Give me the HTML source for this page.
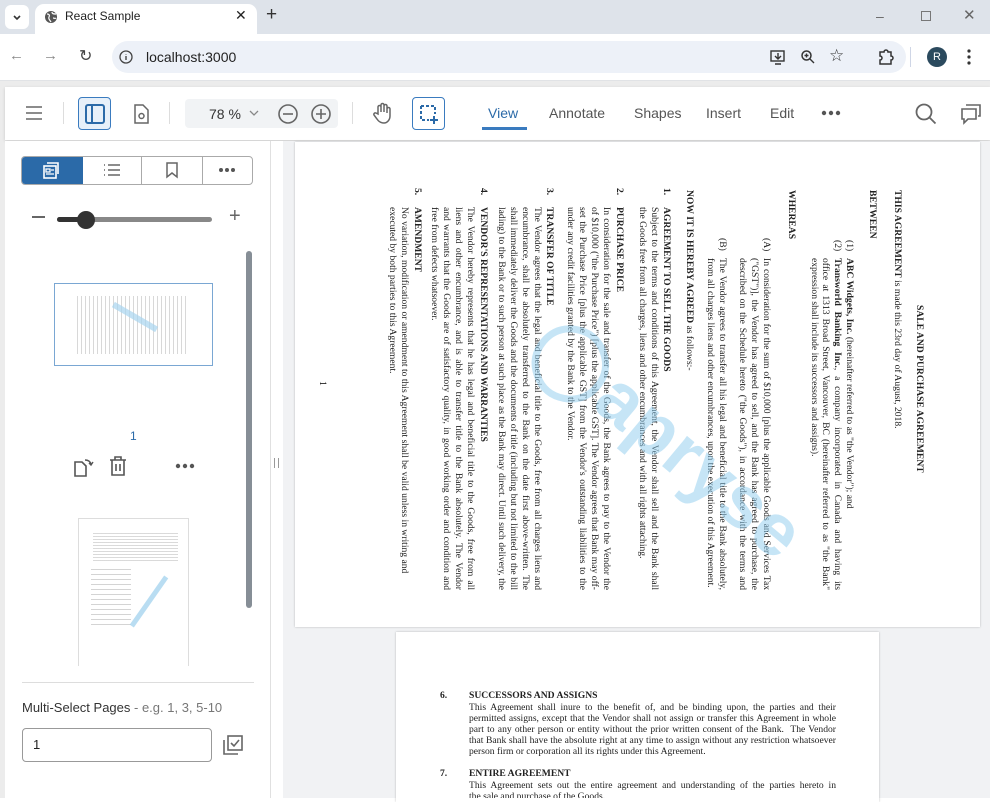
<!DOCTYPE html>
<html><head><meta charset="utf-8"><style>
*{margin:0;padding:0;box-sizing:border-box}
body{width:990px;height:798px;overflow:hidden;position:relative;background:#fff;font-family:"Liberation Sans",sans-serif}
.a{position:absolute}
.ser{font-family:"Liberation Serif",serif;color:#222}
.l{position:absolute;white-space:nowrap;font-size:9.6px;line-height:11px}
.j{white-space:normal;text-align:justify;text-align-last:justify;height:11px;overflow:hidden}
b{font-weight:bold}
.tb{color:#555;font-size:14px}
</style></head><body>
<!-- tab bar -->
<div class="a" style="left:0;top:0;width:990px;height:34px;background:#dee3ea"></div>
<div class="a" style="left:5px;top:5px;width:24px;height:24px;border-radius:6px;background:#fff"></div>
<svg class="a" style="left:11px;top:11px" width="12" height="12"><path d="M3 5l3 3 3-3" stroke="#333" stroke-width="1.6" fill="none"/></svg>
<div class="a" style="left:35px;top:4px;width:222px;height:32px;background:#fff;border-radius:9px 9px 0 0"></div>
<svg class="a" style="left:44px;top:10px" width="14" height="14" viewBox="0 0 14 14"><circle cx="7" cy="7" r="6" fill="#555"/><path d="M3 4c2 0 3 1 2 3s1 3 2 5M8 2c0 2 2 2 4 2M9 8c1 0 2 1 3 0" stroke="#fff" stroke-width="1.2" fill="none"/></svg>
<div class="a" style="left:65px;top:9px;font-size:12px;color:#222">React Sample</div>
<div class="a" style="left:235px;top:7px;font-size:14px;color:#222">✕</div>
<div class="a" style="left:266px;top:4px;font-size:19px;color:#333">+</div>
<div class="a" style="left:876px;top:8px;font-size:14px;color:#666">–</div>
<div class="a" style="left:921px;top:11px;width:10px;height:10px;border:1px solid #777"></div>
<div class="a" style="left:963px;top:6px;font-size:15px;color:#666">✕</div>
<!-- address bar -->
<div class="a" style="left:0;top:34px;width:990px;height:46px;background:#fff"></div>
<div class="a" style="left:9px;top:47px;font-size:15px;color:#888">←</div>
<div class="a" style="left:43px;top:47px;font-size:15px;color:#888">→</div>
<div class="a" style="left:79px;top:46px;font-size:16px;color:#444">↻</div>
<div class="a" style="left:112px;top:41px;width:794px;height:32px;border-radius:16px;background:#edf1f8"></div>
<svg class="a" style="left:119px;top:50px" width="14" height="14"><circle cx="7" cy="7" r="6" stroke="#444" fill="none" stroke-width="1.3"/><path d="M7 6v4M7 4v.5" stroke="#444" stroke-width="1.4"/></svg>
<div class="a" style="left:146px;top:49px;font-size:14px;color:#222">localhost:3000</div>
<svg class="a" style="left:769px;top:48px" width="18" height="18"><rect x="2" y="3" width="13" height="10" fill="none" stroke="#333" stroke-width="1.4"/><path d="M9 5v6M6 8l3 3 3-3M6 16h6" stroke="#333" stroke-width="1.4" fill="none"/></svg>
<svg class="a" style="left:800px;top:49px" width="16" height="16"><circle cx="6.5" cy="6.5" r="4.5" fill="none" stroke="#333" stroke-width="1.5"/><path d="M10 10l4 4M4.5 6.5h4M6.5 4.5v4" stroke="#333" stroke-width="1.4"/></svg>
<div class="a" style="left:829px;top:46px;font-size:17px;color:#333">☆</div>
<svg class="a" style="left:877px;top:48px" width="18" height="18"><path d="M3 4h4a2 2 0 014 0h3v4a2 2 0 010 4v4H3v-4a2 2 0 000-4z" fill="none" stroke="#333" stroke-width="1.5"/></svg>
<div class="a" style="left:910px;top:47px;width:1px;height:20px;background:#cfd6e6"></div>
<div class="a" style="left:927px;top:47px;width:20px;height:20px;border-radius:50%;background:#2b4a5e;color:#fff;font-size:11px;text-align:center;line-height:20px">R</div>
<svg class="a" style="left:966px;top:48px" width="6" height="18"><circle cx="3" cy="3" r="1.6" fill="#333"/><circle cx="3" cy="9" r="1.6" fill="#333"/><circle cx="3" cy="15" r="1.6" fill="#333"/></svg>
<div class="a" style="left:0;top:80px;width:990px;height:1px;background:#e1e3e6"></div>
<!-- app frame -->
<div class="a" style="left:0;top:81px;width:990px;height:717px;background:#ececec"></div>
<div class="a" style="left:5px;top:87px;width:985px;height:53px;background:#fff;box-shadow:0 1px 3px rgba(0,0,0,.15)"></div>
<!-- toolbar -->
<svg class="a" style="left:25px;top:105px" width="18" height="16"><path d="M1 2h16M1 8h16M1 14h16" stroke="#666" stroke-width="1.6"/></svg>
<div class="a" style="left:63px;top:102px;width:1px;height:22px;background:#ddd"></div>
<div class="a" style="left:78px;top:97px;width:33px;height:33px;border:1px solid #3a7bbf;border-radius:4px;background:#e7f0f9"></div>
<svg class="a" style="left:84px;top:103px" width="22" height="22"><rect x="2" y="2" width="18" height="18" rx="2" fill="none" stroke="#2b6aa8" stroke-width="2"/><path d="M8 2v18" stroke="#2b6aa8" stroke-width="2"/></svg>
<svg class="a" style="left:132px;top:103px" width="18" height="22"><path d="M3 2h8l5 5v13H3z" fill="none" stroke="#666" stroke-width="1.5"/><circle cx="9.5" cy="13" r="2.5" fill="none" stroke="#666" stroke-width="1.5"/></svg>
<div class="a" style="left:169px;top:102px;width:1px;height:22px;background:#ddd"></div>
<div class="a" style="left:185px;top:99px;width:153px;height:29px;background:#f1f3f5;border-radius:4px"></div>
<div class="a" style="left:209px;top:106px;font-size:14px;color:#333">78 %</div>
<svg class="a" style="left:249px;top:109px" width="10" height="8"><path d="M1 2l4 4 4-4" stroke="#888" fill="none" stroke-width="1.3"/></svg>
<svg class="a" style="left:277px;top:103px" width="22" height="22"><circle cx="11" cy="11" r="9" fill="none" stroke="#666" stroke-width="1.6"/><path d="M6 11h10" stroke="#666" stroke-width="1.6"/></svg>
<svg class="a" style="left:310px;top:103px" width="22" height="22"><circle cx="11" cy="11" r="9" fill="none" stroke="#666" stroke-width="1.6"/><path d="M6 11h10M11 6v10" stroke="#666" stroke-width="1.6"/></svg>
<div class="a" style="left:352px;top:102px;width:1px;height:22px;background:#ddd"></div>
<svg class="a" style="left:372px;top:101px" width="22" height="24"><path d="M6 13V6a1.5 1.5 0 013 0v5V4a1.5 1.5 0 013 0v7V5a1.5 1.5 0 013 0v7V8a1.5 1.5 0 013 0v7c0 4-3 7-6 7s-5-1-7-4l-3-4a1.5 1.5 0 012-2z" fill="none" stroke="#666" stroke-width="1.5"/></svg>
<div class="a" style="left:412px;top:97px;width:33px;height:33px;border:1px solid #3a7bbf;border-radius:4px;background:#fff"></div>
<svg class="a" style="left:418px;top:103px" width="22" height="22"><path d="M3 3h14v8M3 3v14h8" fill="none" stroke="#2b6aa8" stroke-width="2" stroke-dasharray="3 2"/><path d="M16 13v8M12 17h8" stroke="#2b6aa8" stroke-width="2"/></svg>
<div class="a tb" style="left:488px;top:105px;color:#2b6aa8">View</div>
<div class="a" style="left:482px;top:127px;width:45px;height:3px;background:#3a7bbf"></div>
<div class="a tb" style="left:549px;top:105px">Annotate</div>
<div class="a tb" style="left:634px;top:105px">Shapes</div>
<div class="a tb" style="left:706px;top:105px">Insert</div>
<div class="a tb" style="left:770px;top:105px">Edit</div>
<svg class="a" style="left:821px;top:109px" width="20" height="8"><circle cx="3" cy="4" r="2.2" fill="#555"/><circle cx="10" cy="4" r="2.2" fill="#555"/><circle cx="17" cy="4" r="2.2" fill="#555"/></svg>
<svg class="a" style="left:914px;top:102px" width="24" height="24"><circle cx="10" cy="10" r="7.5" fill="none" stroke="#666" stroke-width="1.8"/><path d="M15.5 15.5l6 6" stroke="#666" stroke-width="1.8"/></svg>
<svg class="a" style="left:960px;top:102px" width="24" height="24"><path d="M6 3h14v11h-2" fill="none" stroke="#666" stroke-width="1.6"/><path d="M2 7h14v10H8l-4 4v-4H2z" fill="none" stroke="#666" stroke-width="1.6"/></svg>
<!-- left panel -->
<div class="a" style="left:5px;top:141px;width:265px;height:657px;background:#fff"></div>
<div class="a" style="left:270px;top:141px;width:13px;height:657px;background:#fff;border-left:1px solid #e0e0e0"></div>
<div class="a" style="left:274px;top:458px;width:5px;height:10px;border-left:1.5px solid #999;border-right:1.5px solid #999"></div>
<div class="a" style="left:21px;top:156px;width:232px;height:29px;border:1px solid #aaa;border-radius:4px;overflow:hidden;display:flex">
<div style="width:61px;background:#2b6aa8;border-right:1px solid #2b6aa8"></div>
<div style="width:59px;border-right:1px solid #aaa"></div>
<div style="width:61px;border-right:1px solid #aaa"></div></div>
<svg class="a" style="left:41px;top:161px" width="20" height="20"><rect x="3" y="5" width="12" height="12" fill="none" stroke="#fff" stroke-width="1.6"/><path d="M6 2h11v11" fill="none" stroke="#fff" stroke-width="1.6"/><path d="M5 8h4v3H5zM5 13h8M10 9h3" stroke="#fff" stroke-width="1.3" fill="none"/></svg>
<svg class="a" style="left:102px;top:162px" width="20" height="16"><path d="M2 3h1M6 3h12M2 8h1M6 8h12M2 13h1M6 13h12" stroke="#666" stroke-width="1.6"/></svg>
<svg class="a" style="left:164px;top:161px" width="16" height="18"><path d="M3 2h10v14l-5-4-5 4z" fill="none" stroke="#666" stroke-width="1.5"/></svg>
<svg class="a" style="left:218px;top:167px" width="18" height="6"><circle cx="3" cy="3" r="2" fill="#555"/><circle cx="9" cy="3" r="2" fill="#555"/><circle cx="15" cy="3" r="2" fill="#555"/></svg>
<div class="a" style="left:32px;top:216px;width:13px;height:2px;background:#666"></div>
<div class="a" style="left:57px;top:217px;width:155px;height:5px;border-radius:3px;background:#888"></div>
<div class="a" style="left:57px;top:217px;width:30px;height:5px;border-radius:3px;background:#333"></div>
<div class="a" style="left:77px;top:211px;width:18px;height:18px;border-radius:50%;background:#333"></div>
<div class="a" style="left:229px;top:205px;font-size:20px;color:#666">+</div>
<div class="a" style="left:246px;top:251px;width:6px;height:357px;border-radius:3px;background:#868e96"></div>
<div class="a" style="left:54px;top:283px;width:159px;height:83px;border:1px solid #7aa7d3;background:#fff;overflow:hidden">
<div class="a" style="left:22px;top:12px;width:112px;height:58px;background:repeating-linear-gradient(90deg,#c8c8c8 0 1px,transparent 1px 4px);opacity:.7"></div>
<div class="a" style="left:55px;top:30px;width:50px;height:6px;background:#a8d4ef;transform:rotate(30deg);opacity:.7"></div></div>
<div class="a" style="left:130px;top:429px;font-size:12px;color:#2b6aa8">1</div>
<svg class="a" style="left:72px;top:456px" width="24" height="22"><path d="M3 6h7l4 4v10H3z" fill="none" stroke="#555" stroke-width="1.6"/><path d="M13 4c3 0 5 1 6 4M17 7l2 2 2-3" fill="none" stroke="#555" stroke-width="1.4"/></svg>
<svg class="a" style="left:108px;top:455px" width="20" height="22"><path d="M2 5h16M7 5V2h6v3M4 5v15h12V5M8 9v7M12 9v7" fill="none" stroke="#555" stroke-width="1.6"/></svg>
<svg class="a" style="left:175px;top:463px" width="20" height="6"><circle cx="3" cy="3" r="2.2" fill="#555"/><circle cx="10" cy="3" r="2.2" fill="#555"/><circle cx="17" cy="3" r="2.2" fill="#555"/></svg>
<div class="a" style="left:78px;top:518px;width:111px;height:148px;border:1px solid #ddd;border-bottom:none;background:#fff;overflow:hidden">
<div class="a" style="left:14px;top:14px;width:85px;height:28px;background:repeating-linear-gradient(180deg,#d0d0d0 0 1px,transparent 1px 3px);opacity:.8"></div>
<div class="a" style="left:12px;top:50px;width:40px;height:60px;background:repeating-linear-gradient(180deg,#d4d4d4 0 1px,transparent 1px 5px)"></div>
<div class="a" style="left:40px;top:80px;width:60px;height:5px;background:#a8d4ef;transform:rotate(-55deg);opacity:.8"></div></div>
<div class="a" style="left:22px;top:682px;width:232px;height:1px;background:#ddd"></div>
<div class="a" style="left:22px;top:700px;font-size:13px;color:#333">Multi-Select Pages <span style="color:#777">- e.g. 1, 3, 5-10</span></div>
<div class="a" style="left:22px;top:728px;width:190px;height:34px;border:1px solid #999;border-radius:4px;padding:8px 10px;font-size:13px;color:#222">1</div>
<svg class="a" style="left:221px;top:733px" width="24" height="24"><path d="M3 7v14h14" fill="none" stroke="#666" stroke-width="1.6"/><rect x="7" y="3" width="14" height="14" fill="none" stroke="#666" stroke-width="1.6"/><path d="M10 10l3 3 5-6" fill="none" stroke="#666" stroke-width="1.6"/></svg>
<!-- doc area -->
<div class="a" style="left:283px;top:141px;width:707px;height:657px;background:#f1f2f4"></div>
<div class="a" style="left:295px;top:142px;width:685px;height:485px;background:#fff;box-shadow:0 0 2px rgba(0,0,0,.25)"></div>
<div class="a ser" style="left:925px;top:170px;width:430px;height:530px;transform:rotate(90deg);transform-origin:0 0">
<div class="l" style="left:135px;top:0"><b>SALE AND PURCHASE AGREEMENT</b></div>
<div class="l" style="left:20px;top:22px"><b>THIS AGREEMENT</b> is made this 23rd day of August, 2018.</div>
<div class="l" style="left:20px;top:47px"><b>BETWEEN</b></div>
<div class="l" style="left:70px;top:70px">(1)</div><div class="l" style="left:88px;top:70px"><b>ABC Widgets, Inc.</b> (hereinafter referred to as "the Vendor"); and</div>
<div class="l" style="left:70px;top:82px">(2)</div><div class="l j" style="left:88px;top:82px;width:332px"><b>Transworld Banking Inc.</b>, a company incorporated in Canada and having its registered</div>
<div class="l j" style="left:88px;top:94px;width:332px">office at 1313 Broad Street, Vancouver, BC (hereinafter referred to as "the Bank" which</div>
<div class="l" style="left:88px;top:105px">expression shall include its successors and assigns).</div>
<div class="l" style="left:20px;top:128px"><b>WHEREAS</b></div>
<div class="l" style="left:68px;top:153px">(A)</div><div class="l j" style="left:88px;top:153px;width:332px">In consideration for the sum of $10,000 [plus the applicable Goods and Services Tax</div>
<div class="l j" style="left:88px;top:165px;width:332px">("GST")], the Vendor has agreed to sell, and the Bank has agreed to purchase, the Goods</div>
<div class="l j" style="left:88px;top:177px;width:332px">described on the Schedule hereto ("the Goods"), in accordance with the terms and conditions.</div>
<div class="l" style="left:68px;top:197px">(B)</div><div class="l j" style="left:88px;top:197px;width:332px">The Vendor agrees to transfer all his legal and beneficial title to the Bank absolutely, free</div>
<div class="l" style="left:88px;top:209px">from all charges liens and other encumbrances, upon the execution of this Agreement.</div>
<div class="l" style="left:20px;top:230px"><b>NOW IT IS HEREBY AGREED</b> as follows:-</div>
<div class="l" style="left:18px;top:253px"><b>1.</b></div><div class="l" style="left:37px;top:253px"><b>AGREEMENT TO SELL THE GOODS</b></div>
<div class="l j" style="left:37px;top:265px;width:383px">Subject to the terms and conditions of this Agreement, the Vendor shall sell and the Bank shall purchase</div>
<div class="l" style="left:37px;top:277px">the Goods free from all charges, liens and other encumbrances and with all rights attaching.</div>
<div class="l" style="left:18px;top:300px"><b>2.</b></div><div class="l" style="left:37px;top:300px"><b>PURCHASE PRICE</b></div>
<div class="l j" style="left:37px;top:313px;width:383px">In consideration for the sale and transfer of the Goods, the Bank agrees to pay to the Vendor the sum</div>
<div class="l j" style="left:37px;top:325px;width:383px">of $10,000 ("the Purchase Price") [plus the applicable GST]. The Vendor agrees that Bank may off-</div>
<div class="l j" style="left:37px;top:337px;width:383px">set the Purchase Price [plus the applicable GST] from the Vendor's outstanding liabilities to the Bank</div>
<div class="l" style="left:37px;top:349px">under any credit facilities granted by the Bank to the Vendor.</div>
<div class="l" style="left:18px;top:370px"><b>3.</b></div><div class="l" style="left:37px;top:370px"><b>TRANSFER OF TITLE</b></div>
<div class="l j" style="left:37px;top:382px;width:383px">The Vendor agrees that the legal and beneficial title to the Goods, free from all charges liens and other</div>
<div class="l j" style="left:37px;top:394px;width:383px">encumbrance, shall be absolutely transferred to the Bank on the date first above-written. The Vendor</div>
<div class="l j" style="left:37px;top:406px;width:383px">shall immediately deliver the Goods and the documents of title (including but not limited to the bill of</div>
<div class="l j" style="left:37px;top:418px;width:383px">lading) to the Bank or to such person at such place as the Bank may direct. Until such delivery, the</div>
<div class="l" style="left:18px;top:436px"><b>4.</b></div><div class="l" style="left:37px;top:436px"><b>VENDOR'S REPRESENTATIONS AND WARRANTIES</b></div>
<div class="l j" style="left:37px;top:449px;width:383px">The Vendor hereby represents that he has legal and beneficial title to the Goods, free from all charges</div>
<div class="l j" style="left:37px;top:461px;width:383px">liens and other encumbrance, and is able to transfer title to the Bank absolutely. The Vendor declares</div>
<div class="l j" style="left:37px;top:473px;width:383px">and warrants that the Goods are of satisfactory quality, in good working order and condition and are</div>
<div class="l" style="left:37px;top:485px">free from defects whatsoever.</div>
<div class="l" style="left:18px;top:502px"><b>5.</b></div><div class="l" style="left:37px;top:502px"><b>AMENDMENT</b></div>
<div class="l" style="left:37px;top:515px">No variation, modification or amendment to this Agreement shall be valid unless in writing and</div>
<div class="l" style="left:37px;top:527px">executed by both parties to this Agreement.</div>
<div class="l" style="left:211px;top:597px">1</div>
</div>
<div class="a" style="left:570px;top:300px;font-size:74px;font-weight:bold;font-family:'Liberation Sans',sans-serif;color:#8fcdef;opacity:.5;transform:rotate(40deg);transform-origin:0 0;letter-spacing:1px">◯apryse</div>
<!-- page 2 -->
<div class="a" style="left:396px;top:632px;width:483px;height:170px;background:#fff;box-shadow:0 0 2px rgba(0,0,0,.25)"></div>
<div class="a ser" style="left:396px;top:632px;width:483px;height:166px;overflow:hidden">
<div class="l" style="left:44px;top:58px"><b>6.</b></div><div class="l" style="left:73px;top:58px"><b>SUCCESSORS AND ASSIGNS</b></div>
<div class="l j" style="left:73px;top:70px;width:367px">This Agreement shall inure to the benefit of, and be binding upon, the parties and their successors and</div>
<div class="l j" style="left:73px;top:81px;width:367px">permitted assigns, except that the Vendor shall not assign or transfer this Agreement in whole or in</div>
<div class="l j" style="left:73px;top:92px;width:367px">part to any other person or entity without the prior written consent of the Bank. &nbsp;The Vendor agrees</div>
<div class="l j" style="left:73px;top:103px;width:367px">that Bank shall have the absolute right at any time to assign without any restriction whatsoever to any</div>
<div class="l" style="left:73px;top:114px">person firm or corporation all its rights under this Agreement.</div>
<div class="l" style="left:44px;top:136px"><b>7.</b></div><div class="l" style="left:73px;top:136px"><b>ENTIRE AGREEMENT</b></div>
<div class="l j" style="left:73px;top:148px;width:367px">This Agreement sets out the entire agreement and understanding of the parties hereto in connection with</div>
<div class="l" style="left:73px;top:159px">the sale and purchase of the Goods.</div>
</div>
</body></html>
